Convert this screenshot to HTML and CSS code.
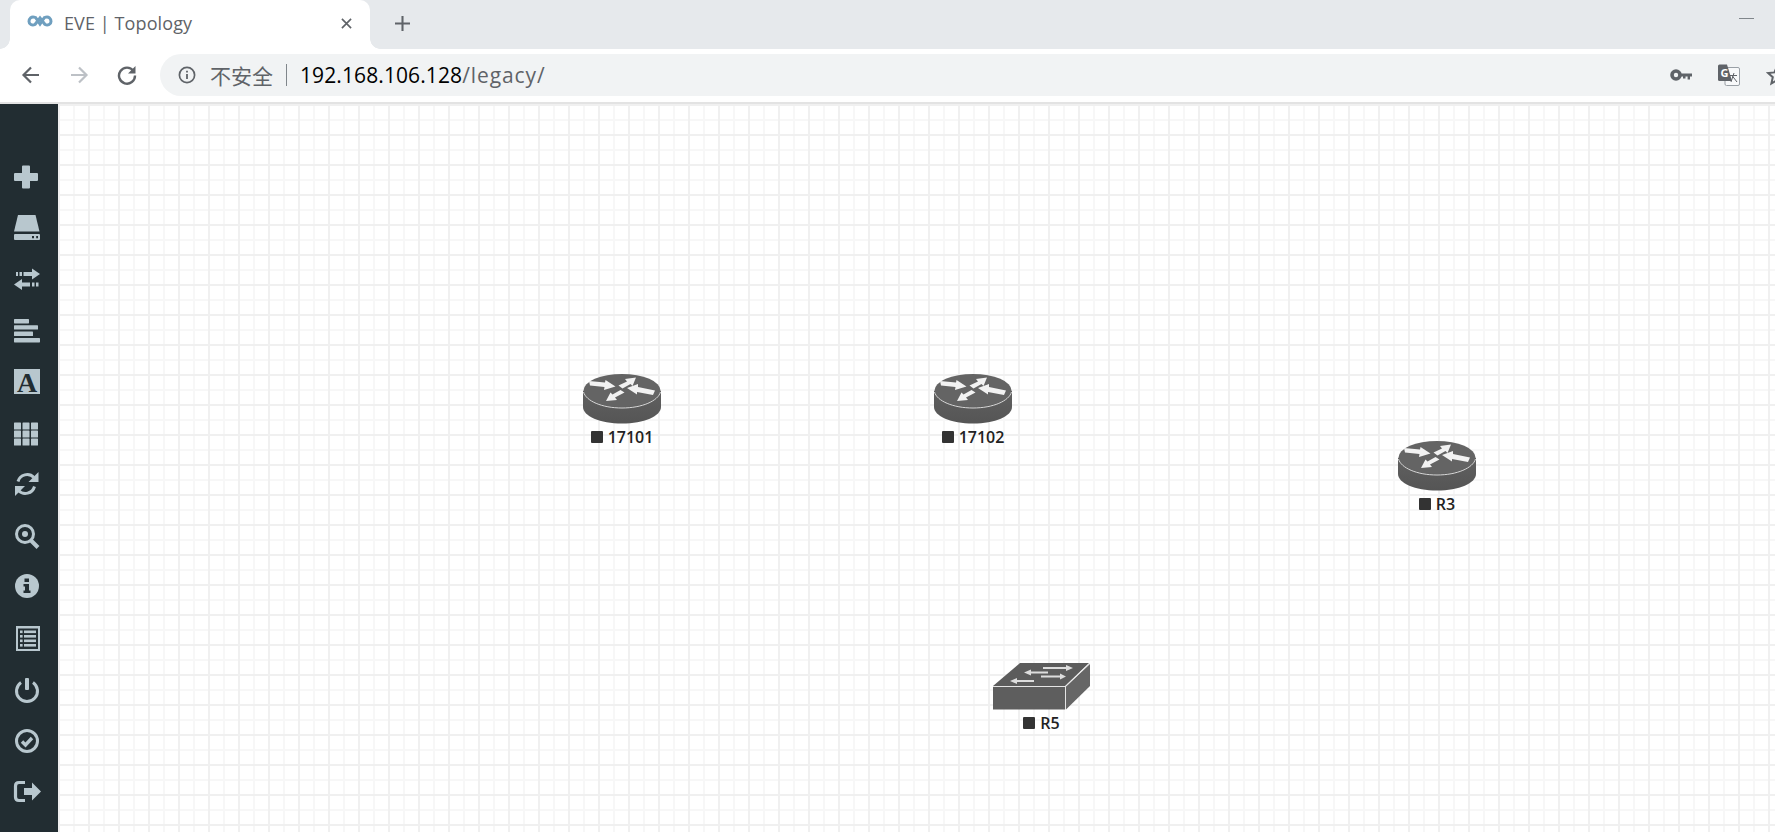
FILE: index.html
```html
<!DOCTYPE html>
<html lang="zh">
  <head>
    <meta charset="UTF-8" />
    <title>EVE | Topology</title>
    <link rel="stylesheet" href="styles.css">
  </head>
  <body>
    <!-- Tab strip -->
    <header class="tabstrip">
      <div class="tab">
        <svg class="favicon" viewBox="0 0 24 13"><path d="M7.5 2.5 C3 0.5 1 4 1 6.5 C1 9 4 11 7 9.5 L12 3 L17 9.5 C20 11 23 9 23 6.5 C23 4 21 0.5 16.5 2.5 L12 9 Z" fill="none" stroke="#6f9fbf" stroke-width="3"/></svg>
        <span class="tab-title">EVE | Topology</span>
        <svg class="tab-close" viewBox="0 0 12 12"><path d="M1 1 L11 11 M11 1 L1 11" stroke="#5f6368" stroke-width="1.8"/></svg>
      </div>
      <svg class="new-tab" viewBox="0 0 16 16"><path d="M8 0 V16 M0 8 H16" stroke="#5f6368" stroke-width="2.2"/></svg>
      <div class="minimize"></div>
    </header>

    <!-- Toolbar -->
    <div class="toolbar">
      <svg class="nav-btn" viewBox="0 0 20 20"><path d="M18 10 H3 M10 2.5 L2.5 10 L10 17.5" fill="none" stroke="#5f6368" stroke-width="2.2"/></svg>
      <svg class="nav-btn" viewBox="0 0 20 20"><path d="M2 10 H17 M10 2.5 L17.5 10 L10 17.5" fill="none" stroke="#bdc1c6" stroke-width="2.2"/></svg>
      <svg class="nav-btn nav-last" viewBox="0 0 20 20"><path d="M16.5 6 A8 8 0 1 0 18 10.5" fill="none" stroke="#5f6368" stroke-width="2.4"/><path d="M18.5 1 V8.5 H11 Z" fill="#5f6368"/></svg>
      <div class="omnibox">
        <svg class="site-info" viewBox="0 0 18 18"><circle cx="9" cy="9" r="7.6" fill="none" stroke="#5f6368" stroke-width="1.7"/><path d="M9 8 V13 M9 4.8 V6.6" stroke="#5f6368" stroke-width="1.8"/></svg>
        <span class="not-secure">不安全</span>
        <span class="url-sep"></span>
        <span class="url"><span class="url-host">192.168.106.128</span><span class="url-path">/legacy/</span></span>
        <div class="omni-actions">
          <svg class="key-icon" viewBox="0 0 22 12"><circle cx="6" cy="6" r="4" fill="none" stroke="#5f6368" stroke-width="3.6"/><path d="M10 4.4 H22 V7.4 H20 V10.5 H17.6 V7.4 H15.5 V9.4 H13 V7.4 H10 Z" fill="#5f6368"/></svg>
          <svg class="translate-icon" viewBox="0 0 22 22"><rect x="7" y="3.5" width="14.5" height="18" rx="1.5" fill="#f8f9fa" stroke="#9aa0a6"/><path d="M1.5 .5 H9 L14 17 H1.5 Q0 17 0 15.5 V2 Q0 .5 1.5 .5 Z" fill="#5f6368"/><text class="translate-g" x="2.5" y="13">G</text><path d="M16 9 L13 18 M12 11.5 H19 M14 11.5 L19 18" stroke="#5f6368" fill="none"/></svg>
          <svg class="star-icon" viewBox="0 0 22 22"><path d="M11 2.5 L13.6 8.4 L20 9 L15.2 13.2 L16.6 19.5 L11 16.2 L5.4 19.5 L6.8 13.2 L2 9 L8.4 8.4 Z" fill="none" stroke="#5f6368" stroke-width="2"/></svg>
        </div>
      </div>
    </div>

    <div class="app">
      <!-- Left menu -->
      <nav class="sidebar">
        <div class="side-item"><svg class="side-icon" viewBox="0 0 28 28"><path d="M11 2.5 H17 Q18 2.5 18 3.5 V10 H25 Q26 10 26 11 V17 Q26 18 25 18 H18 V24.5 Q18 25.5 17 25.5 H11 Q10 25.5 10 24.5 V18 H3 Q2 18 2 17 V11 Q2 10 3 10 H10 V3.5 Q10 2.5 11 2.5 Z"/></svg></div>
        <div class="side-item"><svg class="side-icon" viewBox="0 0 28 28"><path d="M6 1 H23.5 L27.5 17.5 H2 Z"/><path fill-rule="evenodd" d="M3 20 H27 Q28 20 28 21 V25 Q28 26 27 26 H3 Q2 26 2 25 V21 Q2 20 3 20 Z M20 22 V24.2 H22 V22 Z M24.2 22 V24.2 H26 V22 Z"/></svg></div>
        <div class="side-item"><svg class="side-icon" viewBox="0 0 28 28"><path d="M4 7 H6 V11 H4 Z M7.5 7 H10 V11 H7.5 Z M11.5 7 H20 V3.5 L28 9 L20 14.5 V11 H11.5 Z"/><path d="M24 17.5 H26.5 V21.5 H24 Z M20 17.5 H22.5 V21.5 H20 Z M18 17.5 H10 V14 L2 19.5 L10 25 V21.5 H18 Z"/></svg></div>
        <div class="side-item"><svg class="side-icon" viewBox="0 0 28 28"><rect x="2" y="2" width="15" height="4.4" rx=".6"/><rect x="2" y="8.2" width="24" height="4.4" rx=".6"/><rect x="2" y="14.6" width="19" height="4.4" rx=".6"/><rect x="2" y="21" width="26" height="4.4" rx=".6"/></svg></div>
        <div class="side-item"><svg class="side-icon" viewBox="0 0 28 28"><rect x="2" y="1" width="26" height="25"/><text class="font-glyph" x="15" y="23.5" text-anchor="middle">A</text></svg></div>
        <div class="side-item"><svg class="side-icon" viewBox="0 0 28 28"><rect x="2" y="3.5" width="7" height="7" rx=".6"/><rect x="10.5" y="3.5" width="7" height="7" rx=".6"/><rect x="19" y="3.5" width="7" height="7" rx=".6"/><rect x="2" y="11.5" width="7" height="7" rx=".6"/><rect x="10.5" y="11.5" width="7" height="7" rx=".6"/><rect x="19" y="11.5" width="7" height="7" rx=".6"/><rect x="2" y="19.5" width="7" height="7" rx=".6"/><rect x="10.5" y="19.5" width="7" height="7" rx=".6"/><rect x="19" y="19.5" width="7" height="7" rx=".6"/></svg></div>
        <div class="side-item"><svg class="side-icon" viewBox="0 0 28 28"><path d="M6 11.5 A9.5 9.5 0 0 1 22 7.5" fill="none" stroke="#b8c7ce" stroke-width="3"/><path d="M26.5 2 V12 H16.5 Z"/><path d="M22.5 16.5 A9.5 9.5 0 0 1 6.5 20.5" fill="none" stroke="#b8c7ce" stroke-width="3"/><path d="M3 26 V16 H13 Z"/></svg></div>
        <div class="side-item"><svg class="side-icon" viewBox="0 0 28 28"><circle cx="13" cy="12" r="8.5" fill="none" stroke="#b8c7ce" stroke-width="3"/><circle cx="13" cy="12" r="3"/><path d="M19 18.5 L26 25.5" stroke="#b8c7ce" stroke-width="4"/></svg></div>
        <div class="side-item"><svg class="side-icon" viewBox="0 0 28 28"><circle cx="15" cy="13" r="12"/><path class="cutout" d="M12.5 5.5 H17 V9 H12.5 Z M11.5 11 H17 V17.5 H18.5 V20 H11.5 V17.5 H13 V13.5 H11.5 Z"/></svg></div>
        <div class="side-item"><svg class="side-icon" viewBox="0 0 28 28"><rect x="4" y="2" width="24" height="25"/><rect class="cutout" x="6" y="4.5" width="20" height="20.5"/><rect x="8" y="6.5" width="2.6" height="2.6"/><rect x="12" y="6.5" width="12" height="2.6"/><rect x="8" y="11" width="2.6" height="2.6"/><rect x="12" y="11" width="12" height="2.6"/><rect x="8" y="15.5" width="2.6" height="2.6"/><rect x="12" y="15.5" width="12" height="2.6"/><rect x="8" y="20" width="2.6" height="2.6"/><rect x="12" y="20" width="12" height="2.6"/></svg></div>
        <div class="side-item"><svg class="side-icon" viewBox="0 0 28 28"><path d="M9 6.5 A10.5 10.5 0 1 0 21 6.5" fill="none" stroke="#b8c7ce" stroke-width="3"/><rect x="13" y="2" width="4" height="12" rx="1"/></svg></div>
        <div class="side-item"><svg class="side-icon" viewBox="0 0 28 28"><circle cx="15" cy="14" r="10.5" fill="none" stroke="#b8c7ce" stroke-width="3"/><path d="M10 14.5 L13.5 18 L20 11" fill="none" stroke="#b8c7ce" stroke-width="3.4"/></svg></div>
        <div class="side-item"><svg class="side-icon" viewBox="0 0 28 28"><path d="M13 4.5 H7 Q3.5 4.5 3.5 8 V19 Q3.5 22.5 7 22.5 H13" fill="none" stroke="#b8c7ce" stroke-width="3.2"/><path d="M12 10 H20 V4.5 L29 13.5 L20 22.5 V17 H12 Z"/></svg></div>
      </nav>

      <!-- Topology canvas -->
      <main class="canvas">
        <div class="node node-17101">
          <svg class="router" viewBox="0 0 78 50"><use href="#router-shape"/></svg>
          <div class="node-label"><span class="node-state"></span>17101</div>
        </div>
        <div class="node node-17102">
          <svg class="router" viewBox="0 0 78 50"><use href="#router-shape"/></svg>
          <div class="node-label"><span class="node-state"></span>17102</div>
        </div>
        <div class="node node-r3">
          <svg class="router" viewBox="0 0 78 50"><use href="#router-shape"/></svg>
          <div class="node-label"><span class="node-state"></span>R3</div>
        </div>
        <div class="node node-r5">
          <svg class="switch" viewBox="0 0 97 47">
            <path d="M0 23 L27 0 H96 L72 23 Z" fill="#5c5c5c"/>
            <rect x="0" y="23.5" width="72" height="23" fill="#5e5e5e"/>
            <path d="M73 23.5 L97 1 V23 L73 46.5 Z" fill="#666"/>
            <path d="M0 23.5 H72.5 L96.5 .5 M72.5 23.5 V46.5" fill="none" stroke="#e4e4e4" stroke-width="1"/>
            <path d="M50 5 H74 M36 9.5 H55 M48 13.5 H68 M22 18 H41" stroke="#ddd" stroke-width="1.8"/>
            <path d="M73 2 L80 5 L73 8 Z M38 6.5 L31 9.5 L38 12.5 Z M67 10.5 L73 13.5 L67 16.5 Z M24 15 L17 18 L24 21 Z" fill="#ddd"/>
          </svg>
          <div class="node-label"><span class="node-state"></span>R5</div>
        </div>

        <svg class="defs" width="0" height="0">
          <defs>
            <linearGradient id="router-side" x1="0" y1="0" x2="0" y2="1">
              <stop offset="0" stop-color="#606060"/><stop offset="1" stop-color="#555"/>
            </linearGradient>
            <g id="router-shape">
              <path d="M0 17 V33 C0 42 17 49.5 39 49.5 C61 49.5 78 42 78 33 V17 Z" fill="url(#router-side)"/>
              <ellipse cx="39" cy="16.5" rx="38.5" ry="16.5" fill="#646464"/>
              <path d="M.5 18 C3 27 19 34 39 34 C59 34 75 27 77.5 18" fill="none" stroke="#d8d8d8" stroke-width="1"/>
              <path d="M6 7 L22 8.5 L22.5 6 L32.5 12.5 L21 16 L21.5 13 L7 11.5 Z" fill="#f2f2f2"/>
              <path d="M53 3.5 L42 5 L44 7.5 L35.5 11.5 L39.5 14.5 L47.5 10 L49.5 12 Z" fill="#f2f2f2"/>
              <path d="M23 27 L34 26 L32 23.5 L41.5 18.5 L37.5 16 L29.5 20.5 L27.5 18.5 Z" fill="#f2f2f2"/>
              <path d="M44 14 L55 10 L55 13 L72 16.5 L70 21 L54 18 L54 20.5 Z" fill="#f2f2f2"/>
            </g>
          </defs>
        </svg>
      </main>
    </div>
  </body>
</html>
```

FILE: styles.css
```css
:root{--strip:#e6e9ec;--side:#222d32;--side-icon:#b8c7ce;--grid-major:#f0f0f0;--grid-minor:#f7f7f7}
*{box-sizing:border-box;margin:0;padding:0}
html,body{height:832px;overflow:hidden}
body{background:#fff;font-family:"Open Sans","Noto Sans CJK SC",sans-serif;display:flex;flex-direction:column}

/* browser chrome */
.tabstrip{height:49px;background:var(--strip);display:flex;align-items:center;padding-left:10px;flex:none}
.tab{position:relative;width:360px;height:49px;background:#fff;border-radius:10px 10px 0 0;display:flex;align-items:center;padding:0 18px 3px 18px}
.tab::before,.tab::after{content:"";position:absolute;bottom:0;width:10px;height:10px}
.tab::before{left:-10px;background:radial-gradient(circle at 0 0,transparent 9.5px,#fff 10px)}
.tab::after{right:-10px;background:radial-gradient(circle at 100% 0,transparent 9.5px,#fff 10px)}
.favicon{width:24px;height:13px;margin-right:12px;margin-top:-4px;overflow:visible}
.tab-title{font-size:18px;letter-spacing:.1px;color:#5f6368;flex:1}
.tab-close{width:11px;height:11px}
.new-tab{width:15px;height:15px;margin-left:25px;margin-bottom:3px}
.minimize{width:15px;height:1px;background:#80868b;margin-left:auto;margin-right:21px;margin-bottom:13px}

.toolbar{height:55px;background:#fff;border-bottom:2px solid #e3e3e3;display:flex;align-items:center;padding:0 0 2px 21px;overflow:hidden;flex:none}
.nav-btn{width:20px;height:20px;margin-right:28px;flex:none}
.nav-last{margin-right:23px}
.omnibox{height:42px;flex:1;margin-right:-40px;background:#f1f3f4;border-radius:21px;display:flex;align-items:center;padding:0 27px 0 18px}
.site-info{width:18px;height:18px;flex:none;margin-right:14px}
.not-secure{font-size:21px;color:#5f6368}
.url-sep{width:1px;height:22px;background:#80868b;margin:0 13px 0 13px}
.url{font-size:21px;color:#5f6368}
.url-host{color:#000;letter-spacing:.1px}
.url-path{letter-spacing:.9px}
.omni-actions{margin-left:auto;display:flex;align-items:center;gap:26px}
.key-icon{width:22px;height:12px}
.translate-icon{width:22px;height:22px}
.star-icon{width:22px;height:22px}
.translate-g{font-family:"Open Sans",sans-serif;font-size:11px;font-weight:700;fill:#fff}

/* app */
.app{flex:1;display:flex;min-height:0}
.sidebar{width:58px;background:var(--side);padding:47px 0 0 12px;flex:none}
.side-item{height:51.3px;display:flex;align-items:center}
.side-icon{width:28px;height:28px;fill:var(--side-icon);overflow:visible}
.side-icon .cutout{fill:var(--side)}
.font-glyph{font-family:"Liberation Serif",serif;font-weight:700;font-size:28px;fill:var(--side)}

.canvas{position:relative;flex:1;
  background-color:#fff;
  background-image:
    linear-gradient(var(--grid-major) 2px,transparent 2px),
    linear-gradient(90deg,var(--grid-major) 2px,transparent 2px),
    linear-gradient(var(--grid-minor) 2px,transparent 2px),
    linear-gradient(90deg,var(--grid-minor) 2px,transparent 2px);
  background-size:30px 30px,30px 30px,15px 15px,15px 15px}
.defs{position:absolute}

/* nodes sit on a free canvas */
.node{position:absolute;display:flex;flex-direction:column;align-items:center}
.node-17101{left:525px;top:270px;width:78px}
.node-17102{left:876px;top:270px;width:78px}
.node-r3{left:1340px;top:337px;width:78px}
.node-r5{left:935px;top:559px;width:97px}
.router{width:78px;height:50px;display:block}
.switch{width:97px;height:47px;display:block}
.node-label{display:flex;align-items:center;gap:5px;font-size:16px;font-weight:600;color:#222;margin-top:2px;line-height:22px;white-space:nowrap}
.node-state{width:12px;height:12px;background:#333;border-radius:1px}
```
